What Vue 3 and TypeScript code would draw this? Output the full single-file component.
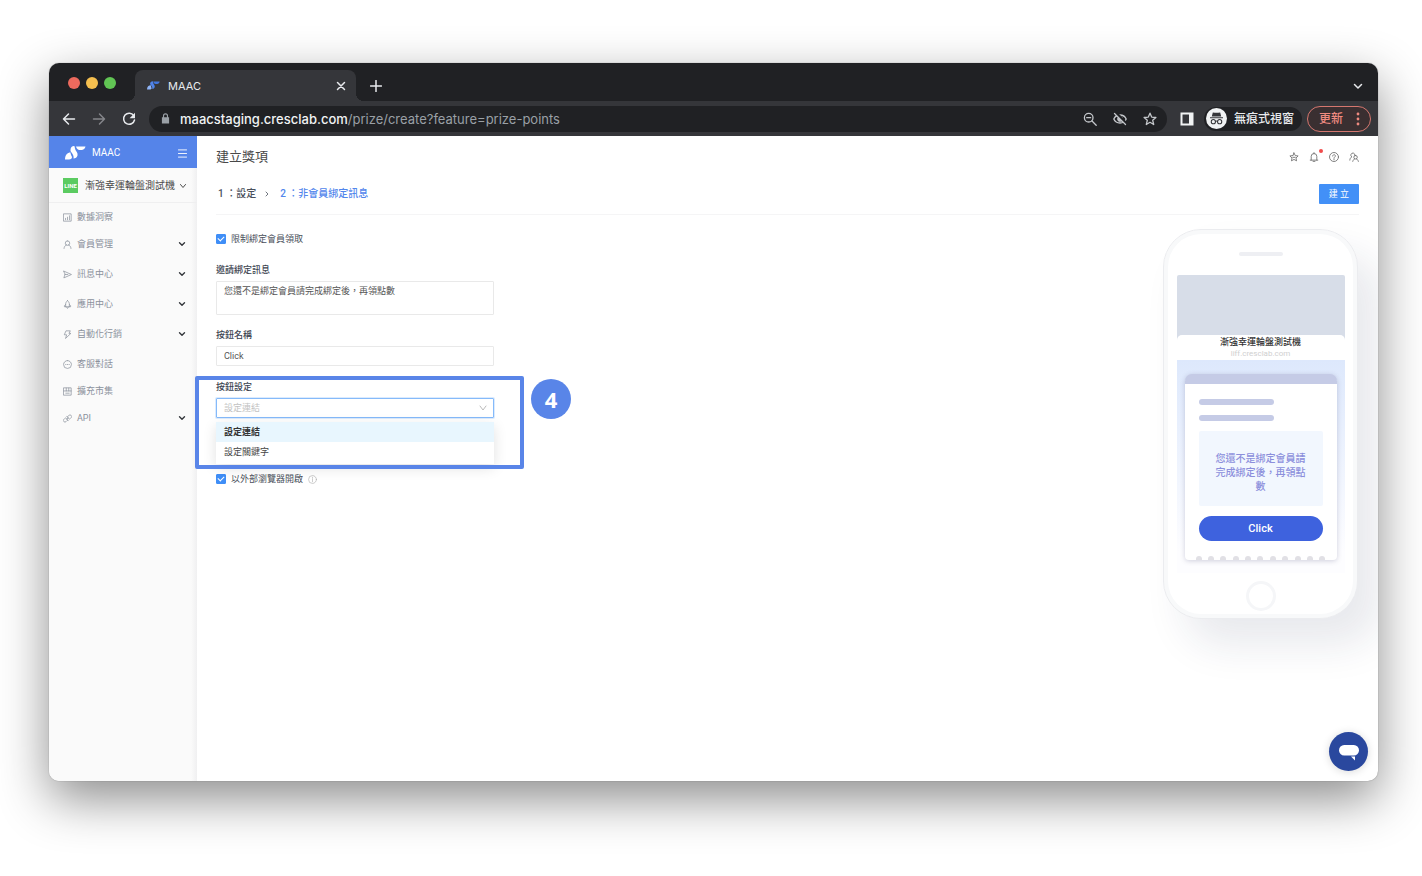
<script setup lang="ts">
import { ref } from 'vue'

interface MenuItem {
  label: string
  icon: string
  expandable: boolean
}

const menu: MenuItem[] = [
  { label: '數據洞察', icon: 'chart', expandable: false },
  { label: '會員管理', icon: 'user', expandable: true },
  { label: '訊息中心', icon: 'send', expandable: true },
  { label: '應用中心', icon: 'rocket', expandable: true },
  { label: '自動化行銷', icon: 'bolt', expandable: true },
  { label: '客服對話', icon: 'chat', expandable: false },
  { label: '擴充市集', icon: 'shop', expandable: false },
  { label: 'API', icon: 'api', expandable: true },
]

const iconPaths: Record<string, string> = {
  chart: 'M1.5 1.5h13v13h-13zM4.500 9.500v2.500M8 7.500V12M11.500 5v7',
  user: 'M8 1.500a4 4 0 1 1 0 8a4 4 0 1 1 0-8M1.800 15c.3-3.300 2-5.200 4.300-6.300M14.200 15c-.3-3.300-2-5.200-4.300-6.300',
  send: 'M1.500 2l13.500 6-13.500 6 2-6zM3.500 8h5',
  rocket: 'M8 1C5.500 3 4.700 5.500 4.700 7.500V12h6.600V7.500C11.300 5.500 10.500 3 8 1zM4.700 8L2.500 10V12h2.200M11.300 8l2.200 2V12h-2.200M6.300 12.500L8 15l1.700-2.500',
  bolt: 'M6 1.500h7L10.500 6H14L4.500 15l2-6.500H3z',
  chat: 'M8 1a7 7 0 1 1 0 14a7 7 0 1 1 0-14M4.700 8h.6M7.700 8h.6M10.700 8h.6',
  shop: 'M1.500 1.500h13v13h-13zM1.500 7h13M5.800 2v5M10.200 2v5M5 11h6',
  api: 'M9 4l1.500-1.500a2.800 2.800 0 0 1 4 4L13 8l-1.800 1L7 5zM7 12l-1.500 1.500a2.800 2.800 0 0 1-4-4L3 8l1.800-1L9 11zM6.500 9.500l3-3',
}

const restrict = ref(true)
const external = ref(true)
const message = ref('您還不是綁定會員請完成綁定後，再領點數')
const buttonName = ref('Click')
const action = ref('link')
const options = [
  { value: 'link', label: '設定連結' },
  { value: 'keyword', label: '設定關鍵字' },
]
</script>

<template>
  <div class="page">
    <div class="window">
      <header class="tabstrip">
        <div class="lights"><i class="red"></i><i class="yellow"></i><i class="green"></i></div>
        <div class="tab">
          <svg class="favicon" viewBox="0 0 42 28"><path fill="#8fb4f6" d="M0 27c0-9 5-14 13-14-1 4 1 6 2 9 0 3-2 5-6 5z" /><path fill="#4f83e8" d="M10 8c0-5 4-8 8-8 2 0 1 4 3 8 2 4 5 6 4 11-1 4-4 6-8 6 1-4-1-8-4-12-2-2-3-3-3-5z" /><path fill="#4377de" d="M20 1h21c-1 5-4 8-8 8h-5c-4 0-7-4-8-8z" /></svg>
          <span>MAAC</span>
          <button class="plain tab-close" aria-label="關閉分頁"><svg viewBox="0 0 10 10"><path d="M1.500 1.500l7 7M8.500 1.500l-7 7" /></svg></button>
        </div>
        <button class="plain new-tab" aria-label="新分頁"><svg viewBox="0 0 12 12"><path d="M6 .5v11M.5 6h11" /></svg></button>
        <button class="plain tab-search" aria-label="搜尋分頁"><svg viewBox="0 0 10 10"><path d="M1.500 3.500L5 7l3.500-3.500" /></svg></button>
      </header>

      <div class="toolbar">
        <button class="plain nav" aria-label="上一頁"><svg viewBox="0 0 14 14"><path d="M12.500 7H1.500M6.500 2L1.500 7l5 5" /></svg></button>
        <button class="plain nav dim" aria-label="下一頁"><svg viewBox="0 0 14 14"><path d="M1.500 7h11M7.500 2l5 5-5 5" /></svg></button>
        <button class="plain nav" aria-label="重新載入"><svg viewBox="0 0 14 14"><path d="M11.700 3.700A5.500 5.500 0 1 0 12.500 8" /><path class="solid" d="M13 .8v5.400H7.600z" /></svg></button>
        <div class="omnibox">
          <svg class="lock" viewBox="0 0 10 12"><path fill="#9aa0a6" d="M1 4.500h8v7H1z" /><path fill="none" stroke="#9aa0a6" stroke-width="1.300" d="M2.800 5V3a2.200 2.200 0 0 1 4.400 0v2" /></svg>
          <span class="url"><b>maacstaging.cresclab.com</b>/prize/create?feature=prize-points</span>
          <button class="plain omni" aria-label="縮放"><svg viewBox="0 0 14 14"><circle cx="5.700" cy="5.700" r="4.300" /><path d="M9 9l4.200 4.200M3.700 5.700h4" /></svg></button>
          <button class="plain omni" aria-label="已封鎖第三方 Cookie"><svg viewBox="0 0 14 14"><path d="M.8 7C2 4.300 4.300 3 7 3s5 1.300 6.200 4C12 9.700 9.700 11 7 11S2 9.700.8 7z" /><circle cx="7" cy="7" r="2.200" fill="currentColor" /><path stroke="#202124" stroke-width="3" d="M3 1l10.500 11" /><path d="M1.500 1.500l11 11" /></svg></button>
          <button class="plain omni" aria-label="加入書籤"><svg viewBox="0 0 14 14"><path d="M7 1.200l1.700 3.900 4.200.4-3.200 2.800 1 4.200L7 10.300l-3.700 2.200 1-4.200L1.100 5.500l4.200-.4z" /></svg></button>
        </div>
        <button class="plain side-panel" aria-label="側邊面板"><svg viewBox="0 0 14 14"><path fill="#f1f3f4" fill-rule="evenodd" d="M.5.500h13v13H.5zM2.500 2.500v9H9v-9z" /></svg></button>
        <div class="incognito">
          <svg viewBox="0 0 20 20"><circle cx="10" cy="10" r="10" fill="#f1f3f4" /><path fill="#35363a" d="M6.500 4.200l2 .4h3l2-.4 1 4h-9zM3.800 8.700h12.400v1.100H3.800z" /><g fill="none" stroke="#35363a" stroke-width="1"><circle cx="7" cy="13" r="2" /><circle cx="13" cy="13" r="2" /><path d="M9 12.800q1-.8 2 0" /></g></svg>
          <span>無痕式視窗</span>
        </div>
        <button class="update">更新<svg viewBox="0 0 4 14"><circle cx="2" cy="2" r="1.400" /><circle cx="2" cy="7" r="1.400" /><circle cx="2" cy="12" r="1.400" /></svg></button>
      </div>

      <div class="app">
        <aside class="sidebar">
          <div class="brand">
            <svg class="logo" viewBox="0 0 42 28"><path fill="#fff" d="M0 27c0-9 5-14 11-14 0 4 2 6 3 9 0 3-2 5-6 5z" /><path fill="#fff" d="M11 8c0-5 3-8 7-8 2 0 1 4 3 8 2 4 5 6 4 11-1 4-4 6-8 6 1-4-1-8-4-12-2-2-2-3-2-5z" /><path fill="#fff" d="M22 1h19c-1 4-4 7-8 7h-4c-3 0-6-3-7-7z" /></svg>
            <span>MAAC</span>
            <button class="plain burger" aria-label="收合選單"><svg viewBox="0 0 10 10"><path d="M.5 1h9M.5 5h9M.5 9h9" /></svg></button>
          </div>
          <button class="plain account">
            <span class="line">LINE</span>
            <span class="account-name">漸強幸運輪盤測試機</span>
            <svg viewBox="0 0 8 8"><path d="M1.500 2.500L4 5.500l2.500-3" /></svg>
          </button>
          <nav class="menu">
            <a v-for="item in menu" :key="item.label" href="#" :class="{ expandable: item.expandable }">
              <svg class="menu-icon" viewBox="0 0 16 16"><path :d="iconPaths[item.icon]" /></svg>
              <span>{{ item.label }}</span>
              <svg v-if="item.expandable" class="caret" viewBox="0 0 8 8"><path d="M1.500 2.700L4 5.200l2.500-2.500" /></svg>
            </a>
          </nav>
        </aside>

        <main class="main">
          <div class="heading">
            <h1>建立獎項</h1>
            <div class="tools">
              <button class="plain" aria-label="收藏"><svg viewBox="0 0 16 16"><path d="M8 1.500l2 4.200 4.600.6-3.400 3.200.9 4.600L8 11.900l-4.100 2.200.9-4.600L1.400 6.300 6 5.700z" /><path d="M6 8.500h4" /></svg></button>
              <button class="plain bell" aria-label="通知"><svg viewBox="0 0 16 16"><path d="M3.500 13V7a4.500 4.500 0 0 1 9 0v6M2 13h12M8 1v1.500M6.500 15h3" /></svg></button>
              <button class="plain" aria-label="說明"><svg viewBox="0 0 16 16"><circle cx="8" cy="8" r="7.200" /><path d="M5.800 6.500c0-3 4.400-3 4.400-.2C10.200 8 8 8 8 9.800M8 11.300v1.200" /></svg></button>
              <button class="plain" aria-label="帳號"><svg viewBox="0 0 16 16"><path d="M9.500 5.500A3.300 3.300 0 1 0 4.500 7.800C2.500 8.800 1.500 10.500 1.300 13M10.500 5.500a2.800 2.800 0 1 1 0 5.600a2.800 2.800 0 1 1 0-5.600M6 15c.5-2 1.500-3.300 3-4M15 15c-.5-2-1.500-3.300-3-4" /></svg></button>
            </div>
          </div>
          <div class="steps">
            <span class="step">1 ：設定</span>
            <svg viewBox="0 0 8 8"><path d="M3 2l2 2-2 2" /></svg>
            <span class="step current">2 ：非會員綁定訊息</span>
            <button class="create">建 立</button>
          </div>

          <div class="body">
            <form class="form" @submit.prevent>
              <label class="check"><input v-model="restrict" type="checkbox" /><span>限制綁定會員領取</span></label>
              <div class="field first">
                <label for="invite">邀請綁定訊息</label>
                <textarea id="invite" v-model="message"></textarea>
              </div>
              <div class="field">
                <label for="button-name">按鈕名稱</label>
                <input id="button-name" v-model="buttonName" type="text" />
              </div>
              <div class="field setting">
                <label for="action">按鈕設定</label>
                <div class="select">
                  <select id="action" v-model="action">
                    <option v-for="o in options" :key="o.value" :value="o.value">{{ o.label }}</option>
                  </select>
                  <svg viewBox="0 0 8 8"><path d="M1 2l3 4 3-4" /></svg>
                  <div class="dropdown">
                    <button v-for="o in options" :key="o.value" type="button" :class="{ active: o.value === action }" @click="action = o.value">{{ o.label }}</button>
                  </div>
                </div>
                <div class="callout"><span class="badge">4</span></div>
              </div>
              <label class="check external">
                <input v-model="external" type="checkbox" /><span>以外部瀏覽器開啟</span>
                <svg class="info" viewBox="0 0 16 16"><circle cx="8" cy="8" r="7" /><path d="M8 7v5M8 4v1.300" /></svg>
              </label>
            </form>

            <section class="phone">
              <div class="speaker"></div>
              <div class="screen">
                <div class="sheet">
                  <strong>漸強幸運輪盤測試機</strong>
                  <small>liff.cresclab.com</small>
                </div>
                <div class="canvas">
                  <div class="card">
                    <div class="bar"></div>
                    <div class="bar"></div>
                    <p>{{ message }}</p>
                    <button class="cta">{{ buttonName }}</button>
                    <div class="dots"><i v-for="n in 11" :key="n"></i></div>
                  </div>
                </div>
              </div>
              <div class="home"></div>
            </section>
          </div>
        </main>
      </div>
      <button class="support" aria-label="線上客服"><svg viewBox="0 0 20 16"><rect x="0" y="0" width="20" height="10.500" rx="5.200" fill="#fff" /><path fill="#fff" d="M12 11.500h4v4z" /></svg></button>
    </div>
  </div>
</template>

<style>
body {
  margin: 0;
  background: #fff;
}
</style>

<style scoped>
* {
  box-sizing: border-box;
}
.page {
  min-height: 100vh;
  padding: 63px 44px 95px 49px;
  display: flex;
  flex-direction: column;
  font-family: Roboto, 'Noto Sans CJK TC', sans-serif;
  font-size: 9px;
  line-height: 14px;
  color: #4a505b;
}
button,
input,
select,
textarea {
  font: inherit;
  color: inherit;
  margin: 0;
}
svg {
  display: block;
  flex: none;
  fill: none;
  stroke-linecap: round;
  stroke-linejoin: round;
}
.plain {
  border: 0;
  padding: 0;
  background: none;
}
.plain > svg {
  stroke: currentColor;
}
.window {
  flex: 1;
  display: flex;
  flex-direction: column;
  position: relative;
  overflow: hidden;
  border-radius: 10px;
  background: #fff;
  box-shadow: 0 0 1px rgba(0, 0, 0, 0.5), 0 18px 50px rgba(0, 0, 0, 0.45);
}

/* browser chrome */
.tabstrip {
  height: 38px;
  display: flex;
  align-items: flex-end;
  background: #202124;
  color: #e8eaed;
}
.lights {
  display: flex;
  gap: 6px;
  width: 86px;
  padding: 0 0 12px 19px;
}
.lights i {
  width: 12px;
  height: 12px;
  border-radius: 50%;
}
.red {
  background: #ed6a5e;
}
.yellow {
  background: #f5bf4f;
}
.green {
  background: #61c554;
}
.tab {
  position: relative;
  width: 221px;
  height: 31px;
  display: flex;
  align-items: center;
  gap: 8px;
  padding: 0 10px 0 12px;
  border-radius: 8px 8px 0 0;
  background: #35363a;
  font-size: 11px;
}
.tab::before,
.tab::after {
  content: '';
  position: absolute;
  bottom: 0;
  width: 8px;
  height: 8px;
}
.tab::before {
  right: 100%;
  background: radial-gradient(circle at 0 0, #202124 8px, #35363a 8px);
}
.tab::after {
  left: 100%;
  background: radial-gradient(circle at 100% 0, #202124 8px, #35363a 8px);
}
.favicon {
  width: 13px;
  height: 9px;
}
.tab-close {
  margin-left: auto;
}
.tab-close svg,
.tab-search svg {
  width: 10px;
  height: 10px;
  stroke-width: 1.5;
}
.new-tab {
  margin: 0 0 9px 14px;
}
.new-tab svg {
  width: 12px;
  height: 12px;
  stroke-width: 1.5;
}
.tab-search {
  margin: 0 15px 10px auto;
}
.toolbar {
  height: 35px;
  display: flex;
  align-items: center;
  padding: 0 7px 0 13px;
  background: #35363a;
  color: #e8eaed;
}
.tab,
.toolbar {
  font-family: Inter, 'Noto Sans CJK TC', sans-serif;
}
.nav {
  margin-right: 16px;
}
.nav:nth-child(3) {
  margin-right: 13px;
}
.nav svg {
  width: 14px;
  height: 14px;
  stroke-width: 1.5;
}
.nav .solid {
  fill: currentColor;
  stroke: none;
}
.dim {
  color: #85868a;
}
.omnibox {
  flex: 1;
  height: 26px;
  display: flex;
  align-items: center;
  padding: 0 10px 0 12px;
  border-radius: 13px;
  background: #202124;
}
.lock {
  width: 9px;
  height: 11px;
}
.url {
  flex: 1;
  margin-left: 10px;
  font-size: 13px;
  line-height: 18px;
  color: #9aa0a6;
}
.url b {
  font-weight: 500;
  color: #f1f3f4;
}
.omni {
  margin-left: 16px;
  color: #c4c7cb;
}
.omni svg {
  width: 14px;
  height: 14px;
  stroke-width: 1.3;
}
.side-panel {
  margin: 0 10px 0 13px;
}
.side-panel svg {
  width: 14px;
  height: 14px;
  stroke: none;
}
.incognito {
  height: 24px;
  display: flex;
  align-items: center;
  gap: 7px;
  padding: 0 8px 0 2px;
  border-radius: 12px;
  background: #202124;
  font-size: 12px;
  font-weight: 500;
}
.incognito svg {
  width: 21px;
  height: 21px;
}
.update {
  height: 26px;
  margin-left: 5px;
  display: flex;
  align-items: center;
  gap: 13px;
  padding: 0 10px 0 11px;
  border: 1px solid #d5776f;
  border-radius: 13px;
  background: #3a2f31;
  color: #ef8a80;
  font-size: 12px;
  font-weight: 500;
}
.update svg {
  width: 4px;
  height: 14px;
  fill: currentColor;
}

/* application */
.app {
  flex: 1;
  display: flex;
}
.sidebar {
  width: 148px;
  flex: none;
  background: linear-gradient(to left, #f0f0f1, #fafafa 6px);
}
.brand {
  height: 32px;
  display: flex;
  align-items: center;
  gap: 6px;
  padding: 2px 10px 0 16px;
  background: #5584e9;
  color: #fff;
  font-size: 10px;
}
.logo {
  width: 21px;
  height: 14px;
}
.burger {
  margin-left: auto;
}
.burger svg {
  width: 9px;
  height: 9px;
  stroke-width: 1;
}
.account {
  width: 100%;
  height: 35px;
  display: flex;
  align-items: center;
  gap: 7px;
  padding: 1px 10px 0 14px;
  border-bottom: 1px solid #efeff0;
  font-size: 10px;
  color: #4b4b4b;
}
.line {
  flex: none;
  width: 15px;
  font-size: 6px;
  line-height: 15px;
  font-weight: 700;
  text-align: center;
  color: #fff;
  background: #5bcb61;
}
.account-name {
  white-space: nowrap;
}
.account svg {
  width: 8px;
  height: 8px;
  margin-left: -3px;
}
.menu {
  padding-top: 2px;
}
.menu a {
  height: 24px;
  margin-bottom: 3px;
  display: flex;
  align-items: center;
  gap: 5px;
  padding: 0 11px 0 14px;
  color: #8b919c;
  text-decoration: none;
}
.menu a.expandable {
  margin-bottom: 6px;
}
.menu-icon {
  width: 9px;
  height: 9px;
  stroke: currentColor;
  stroke-width: 1.3;
}
.caret {
  width: 8px;
  height: 8px;
  margin-left: auto;
  stroke: #33363b;
  stroke-width: 1.4;
}
.main {
  flex: 1;
  min-width: 0;
  padding: 0 19px;
}
.heading {
  height: 42px;
  display: flex;
  align-items: center;
  justify-content: space-between;
}
h1 {
  margin: 0;
  font-size: 13px;
  line-height: 20px;
  font-weight: 400;
  color: #484848;
}
.tools {
  display: flex;
  gap: 10px;
  color: #707070;
}
.tools button {
  position: relative;
}
.tools svg {
  width: 10px;
  height: 10px;
  stroke-width: 1.4;
}
.bell::after {
  content: '';
  position: absolute;
  top: -3px;
  right: -4px;
  width: 4px;
  height: 4px;
  border-radius: 50%;
  background: #f04b4b;
}
.steps {
  height: 37px;
  display: flex;
  align-items: center;
  padding: 0 0 5px 2px;
  border-bottom: 1px solid #f5f5f6;
  font-size: 10px;
  font-weight: 500;
}
.steps svg {
  width: 8px;
  height: 8px;
  margin: 0 9px 0 7px;
  stroke: #70767f;
}
.current {
  color: #5286ec;
}
.create {
  height: 20px;
  margin-left: auto;
  padding: 0 10px;
  border: 0;
  border-radius: 1px;
  background: #4290f7;
  color: #fff;
  font-size: 9px;
  font-weight: 400;
}
.body {
  display: flex;
  align-items: flex-start;
  justify-content: space-between;
  padding-right: 1px;
}
.form {
  width: 278px;
  padding-top: 17px;
}
.check {
  display: flex;
  align-items: center;
  gap: 5px;
}
.check input {
  appearance: none;
  width: 10px;
  height: 10px;
  border: 1px solid #d9d9d9;
  border-radius: 1px;
  display: grid;
  place-items: center;
}
.check input:checked {
  border-color: #3f8ef7;
  background: #3f8ef7;
}
.check input:checked::after {
  content: '';
  width: 3px;
  height: 5px;
  margin-bottom: 2px;
  border: solid #fff;
  border-width: 0 1px 1px 0;
  transform: rotate(45deg);
}
.field {
  display: flex;
  flex-direction: column;
  gap: 4px;
  margin-top: 13px;
}
.field.first {
  margin-top: 17px;
}
.field label {
  font-weight: 500;
  color: #3c4451;
}
.field textarea,
.field input,
.field select {
  display: block;
  width: 100%;
  height: 20px;
  padding: 0 7px;
  border: 1px solid #e9e9e9;
  border-radius: 1px;
  outline: 0;
  background: #fff;
  color: #555;
}
.field textarea {
  height: 34px;
  padding-top: 3px;
  line-height: 13px;
  resize: none;
}
.setting {
  position: relative;
  margin-top: 14px;
}
.select {
  position: relative;
}
.field select {
  appearance: none;
  border-color: #85bafa;
  box-shadow: 0 0 0 1px #dcebfd;
  color: #c2c2c2;
}
.select > svg {
  position: absolute;
  top: 6px;
  right: 7px;
  width: 8px;
  height: 8px;
  stroke: #bbb;
  pointer-events: none;
}
.dropdown {
  position: absolute;
  top: 24px;
  left: 0;
  right: 0;
  padding-bottom: 2px;
  background: #fff;
  box-shadow: 0 4px 14px rgba(0, 0, 0, 0.12);
}
.dropdown button {
  display: block;
  width: 100%;
  height: 20px;
  padding: 0 8px;
  border: 0;
  background: none;
  text-align: left;
  color: #444;
}
.dropdown .active {
  background: #e8f6fe;
  font-weight: 600;
  color: #333;
}
.callout {
  position: absolute;
  top: -4px;
  left: -21px;
  right: -30px;
  height: 93px;
  border: 4px solid #5985e8;
  border-radius: 2px;
  pointer-events: none;
}
.badge {
  position: absolute;
  top: -1px;
  left: calc(100% + 11px);
  width: 40px;
  border-radius: 50%;
  background: #5985e8;
  color: #fff;
  font: 700 22px/40px 'Open Sans', sans-serif;
  text-align: center;
}
.external {
  margin-top: 54px;
}
.info {
  width: 9px;
  height: 9px;
  stroke: #b5b5b5;
  stroke-width: 1.2;
}

/* phone preview */
.phone {
  width: 195px;
  height: 390px;
  margin-top: 14px;
  display: flex;
  flex-direction: column;
  align-items: center;
  border: 1px solid #ebecef;
  border-radius: 38px;
  background: #fff;
  box-shadow: inset 0 0 0 4px #f8f9fa, 22px 26px 40px rgba(30, 40, 75, 0.1);
}
.speaker {
  width: 44px;
  height: 4px;
  margin: 22px 0 19px;
  border-radius: 2px;
  background: #eeeff3;
}
.screen {
  width: 168px;
  border-radius: 2px 2px 0 0;
  padding-top: 60px;
  background: #d7dde8;
}
.sheet {
  display: flex;
  flex-direction: column;
  align-items: center;
  height: 25px;
  border-radius: 5px 5px 0 0;
  background: #fff;
}
.sheet strong {
  font-weight: 500;
  line-height: 14px;
  color: #333;
}
.sheet small {
  font-size: 8px;
  line-height: 9px;
  color: #cfcfcf;
}
.canvas {
  padding: 14px 8px 13px;
  background: linear-gradient(#dde8fc, #fdfdff 90%);
}
.card {
  height: 186px;
  padding: 15px 14px 0;
  display: flex;
  flex-direction: column;
  border-top: 10px solid #c5cbe6;
  border-radius: 7px 7px 4px 4px;
  background: #fff;
  box-shadow: 0 1px 5px rgba(70, 70, 120, 0.25);
}
.bar {
  width: 75px;
  height: 6px;
  margin-bottom: 10px;
  border-radius: 3px;
  background: #c5cbe6;
}
.card p {
  height: 75px;
  margin: 0 0 10px;
  padding: 21px 15px 0;
  border-radius: 2px;
  background: #f2f7fe;
  color: #8c8fdc;
  font-size: 10px;
  font-weight: 500;
  line-height: 14px;
  text-align: center;
}
.cta {
  height: 25px;
  border: 0;
  border-radius: 13px;
  background: #3e62de;
  color: #fff;
  font-size: 11px;
  font-weight: 500;
}
.dots {
  margin: auto -3px 0;
  display: flex;
  justify-content: space-between;
}
.dots i {
  width: 6px;
  height: 4px;
  border-radius: 3px 3px 0 0;
  background: #e1e0e5;
}
.home {
  width: 30px;
  height: 30px;
  margin-top: 8px;
  border: 3px solid #f5f6f8;
  border-radius: 50%;
}
.support {
  position: absolute;
  right: 10px;
  bottom: 10px;
  width: 39px;
  height: 39px;
  display: grid;
  place-items: center;
  padding: 2px 0 0;
  border: 0;
  border-radius: 50%;
  background: #2a489e;
  box-shadow: 0 1px 8px rgba(0, 0, 0, 0.15);
}
.support svg {
  width: 20px;
  height: 16px;
}
</style>
